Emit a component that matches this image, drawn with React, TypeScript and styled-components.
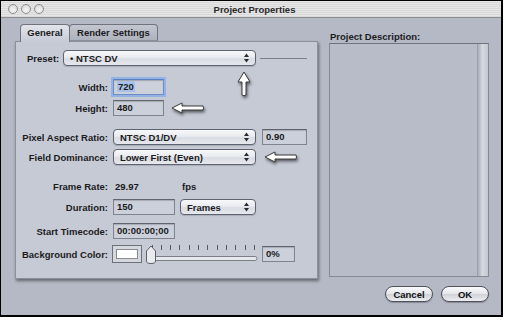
import React from 'react';
import styled, { createGlobalStyle } from 'styled-components';

const GlobalStyle = createGlobalStyle`
  * { box-sizing: border-box; }
  html, body { margin: 0; padding: 0; background: #ffffff; }
  body { font-family: "Liberation Sans", Arial, sans-serif; }
`;

const Window = styled.div`
  width: 503px;
  height: 317px;
  border: 1px solid #000;
  border-right-width: 2px;
  border-bottom-width: 2px;
  background: #b5b9c5;
  display: flex;
  flex-direction: column;
  font-size: 9.5px;
  font-weight: bold;
  color: #1b1b1d;
`;

const TitleBar = styled.div`
  height: 17px;
  flex: none;
  display: grid;
  grid-template-columns: 1fr auto 1fr;
  align-items: center;
  padding-left: 7px;
  background: repeating-linear-gradient(to bottom, #e6e6e6 0, #e6e6e6 1px, #d8d8d8 1px, #d8d8d8 2px);
  border-bottom: 1px solid #8d8d8f;
`;

const Lights = styled.div`
  display: flex;
  gap: 3px;
`;

const Light = styled.span`
  width: 10px;
  height: 10px;
  border-radius: 50%;
  border: 1px solid #8f8f92;
  background: radial-gradient(circle at 50% 65%, #f6f6f6, #d2d2d4);
`;

const Title = styled.div`
  color: #2a2a2c;
  font-size: 9.5px;
`;

const Main = styled.div`
  display: grid;
  grid-template-columns: 303px 160px;
  column-gap: 11px;
  padding: 6px 0 0 14px;
`;

const LeftColumn = styled.div`
  display: flex;
  flex-direction: column;
`;

const TabRow = styled.div`
  display: flex;
  height: 18px;
  padding-left: 5px;
  margin-bottom: -1px;
  position: relative;
  z-index: 1;
`;

const Tab = styled.div<{ $active?: boolean; $w: number }>`
  width: ${p => p.$w}px;
  height: ${p => (p.$active ? 18 : 17)}px;
  margin-left: -1px;
  border: 1px solid #6f737e;
  border-bottom: ${p => (p.$active ? 'none' : '1px solid #8c909a')};
  border-radius: 4px 4px 0 0;
  text-align: center;
  line-height: 16px;
  background: ${p =>
    p.$active
      ? 'linear-gradient(to bottom, #e3e5eb, #c6cad5)'
      : 'linear-gradient(to bottom, #c4c7d0, #adb1bc)'};
  &:first-child { margin-left: 0; }
`;

const Panel = styled.div`
  height: 238px;
  border: 1px solid #8c909a;
  background: #c6cad5;
  box-shadow: 1px 2px 3px rgba(0, 0, 0, 0.45);
  padding-top: 8px;
`;

const PresetRow = styled.div`
  position: relative;
  display: flex;
  align-items: center;
  height: 16px;
  padding-left: 11px;
`;

const PresetLabel = styled.span`
  width: 36px;
`;

const Rule = styled.div`
  width: 47px;
  height: 1px;
  margin-left: 4px;
  background: #7c808a;
`;

const FormRow = styled.div<{ $mt: number; $h?: number }>`
  display: grid;
  grid-template-columns: 92px auto;
  column-gap: 5px;
  align-items: center;
  height: ${p => p.$h ?? 16}px;
  margin-top: ${p => p.$mt}px;
`;

const Label = styled.span`
  text-align: right;
  white-space: nowrap;
`;

const Controls = styled.div<{ $gap?: number }>`
  display: flex;
  align-items: center;
  gap: ${p => p.$gap ?? 0}px;
`;

const PopUp = styled.div<{ $w: number }>`
  width: ${p => p.$w}px;
  height: 16px;
  border: 1px solid #5e6271;
  border-radius: 4px;
  background: linear-gradient(to bottom, #f7f8fa 0%, #e9ebef 45%, #d9dce3 55%, #e6e8ed 100%);
  box-shadow: 0 1px 1px rgba(0, 0, 0, 0.15);
  display: flex;
  align-items: center;
  justify-content: space-between;
  padding: 0 6px 0 6px;
  white-space: nowrap;
`;

const Field = styled.div<{ $w: number; $focused?: boolean }>`
  width: ${p => p.$w}px;
  height: 16px;
  border: 1px solid ${p => (p.$focused ? '#6d8dc6' : '#80848e')};
  border-top-color: ${p => (p.$focused ? '#5d7fbf' : '#60646d')};
  background: #ccd0da;
  box-shadow: ${p =>
    p.$focused
      ? '0 0 0 2px #93b3e6, inset 0 1px 1px rgba(0,0,0,0.2)'
      : 'inset 0 1px 1px rgba(0,0,0,0.18)'};
  padding-left: 3px;
  line-height: 14px;
  white-space: nowrap;
`;

const Selected = styled.span`
  background: #a8c1e8;
  padding: 0 1px;
`;

const Plain = styled.span<{ $w?: number }>`
  display: inline-block;
  width: ${p => (p.$w ? `${p.$w}px` : 'auto')};
  padding-left: 2px;
`;

const Swatch = styled.div`
  width: 30px;
  height: 18px;
  border: 1px solid #6d717a;
  background: #d4d7de;
  padding: 3px 3px;
  margin-left: -1px;
`;

const SwatchColor = styled.div`
  height: 100%;
  background: #ffffff;
  border: 1px solid #8a8c92;
`;

const SliderBox = styled.svg`
  margin-left: 4px;
  margin-right: 4px;
  flex: none;
`;

const Annotation = styled.svg`
  flex: none;
  overflow: visible;
  filter: drop-shadow(1px 2px 1.5px rgba(0, 0, 0, 0.55));
`;

const UpAnnotation = styled(Annotation)`
  position: absolute;
  left: 221px;
  top: 21px;
`;

const RightColumn = styled.div`
  display: flex;
  flex-direction: column;
`;

const DescLabel = styled.div`
  margin-top: 7px;
  height: 12px;
  line-height: 12px;
  padding-left: 1px;
`;

const DescBox = styled.div`
  height: 234px;
  border: 1px solid #858994;
  border-top-color: #6f737d;
  background: #b8bcc8;
  display: flex;
  justify-content: flex-end;
`;

const ScrollTrack = styled.div`
  width: 11px;
  border-left: 1px solid #9ca0aa;
  background: linear-gradient(to right, #a9adb8, #d6d9e0 45%, #c4c7d0);
`;

const Footer = styled.div`
  display: flex;
  justify-content: flex-end;
  gap: 8px;
  padding: 7px 12px 0 0;
`;

const PillButton = styled.div`
  width: 48px;
  height: 16px;
  border: 1px solid #4f525a;
  border-radius: 8px;
  background: linear-gradient(to bottom, #fbfbfc 0%, #e4e6ea 48%, #cfd2d8 52%, #eceef1 100%);
  box-shadow: 0 1px 1px rgba(0, 0, 0, 0.25);
  display: flex;
  align-items: center;
  justify-content: center;
  color: #111;
`;

const Steppers = () => (
  <svg width="5" height="10" viewBox="0 0 5 10">
    <polygon points="0,4 2.5,0.5 5,4" fill="#2a2a2e" />
    <polygon points="0,6 2.5,9.5 5,6" fill="#2a2a2e" />
  </svg>
);

const Select = ({ w, children }: { w: number; children: React.ReactNode }) => (
  <PopUp $w={w}>
    <span>{children}</span>
    <Steppers />
  </PopUp>
);

const LeftArrow = () => (
  <Annotation width="34" height="12" viewBox="0 0 34 12">
    <path
      d="M1 6 L11 1 L11 4 L32 4 Q33 6 32 8 L11 8 L11 11 Z"
      fill="#ffffff"
      stroke="#3a3a3a"
      strokeWidth="1"
      strokeLinejoin="round"
    />
  </Annotation>
);

const UpArrow = () => (
  <UpAnnotation width="14" height="26" viewBox="0 0 14 26">
    <path
      d="M7 1 L13 11 L9 11 L9 24 Q7 25.5 5 24 L5 11 L1 11 Z"
      fill="#ffffff"
      stroke="#3a3a3a"
      strokeWidth="1"
      strokeLinejoin="round"
    />
  </UpAnnotation>
);

const Slider = () => {
  const ticks = Array.from({ length: 12 }, (_, i) => 5.5 + i * 9.3);
  return (
    <SliderBox width="112" height="20" viewBox="0 0 112 20">
      {ticks.map(x => (
        <line key={x} x1={Math.round(x) + 0.5} y1="1" x2={Math.round(x) + 0.5} y2="6" stroke="#55585f" strokeWidth="1" />
      ))}
      <rect x="4" y="12.5" width="107" height="4" rx="2" fill="#e6e8ec" stroke="#7b7f88" />
      <path
        d="M5 2 L9.5 7 L9.5 17 Q9.5 19.5 5 19.5 Q0.5 19.5 0.5 17 L0.5 7 Z"
        fill="#e9ebef"
        stroke="#5c6068"
        strokeWidth="1"
      />
    </SliderBox>
  );
};

export default function App() {
  return (
    <>
      <GlobalStyle />
      <Window>
        <TitleBar>
          <Lights>
            <Light />
            <Light />
            <Light />
          </Lights>
          <Title>Project Properties</Title>
          <span />
        </TitleBar>

        <Main>
          <LeftColumn>
            <TabRow>
              <Tab $active $w={50}>General</Tab>
              <Tab $w={89}>Render Settings</Tab>
            </TabRow>
            <Panel>
              <PresetRow>
                <PresetLabel>Preset:</PresetLabel>
                <Select w={193}>• NTSC DV</Select>
                <Rule />
                <UpArrow />
              </PresetRow>

              <FormRow $mt={13}>
                <Label>Width:</Label>
                <Controls>
                  <Field $w={51} $focused>
                    <Selected>720</Selected>
                  </Field>
                </Controls>
              </FormRow>

              <FormRow $mt={5}>
                <Label>Height:</Label>
                <Controls $gap={7}>
                  <Field $w={51}>480</Field>
                  <LeftArrow />
                </Controls>
              </FormRow>

              <FormRow $mt={13}>
                <Label>Pixel Aspect Ratio:</Label>
                <Controls $gap={6}>
                  <Select w={143}>NTSC D1/DV</Select>
                  <Field $w={45}>0.90</Field>
                </Controls>
              </FormRow>

              <FormRow $mt={4}>
                <Label>Field Dominance:</Label>
                <Controls $gap={8}>
                  <Select w={143}>Lower First (Even)</Select>
                  <LeftArrow />
                </Controls>
              </FormRow>

              <FormRow $mt={13}>
                <Label>Frame Rate:</Label>
                <Controls>
                  <Plain $w={67}>29.97</Plain>
                  <Plain>fps</Plain>
                </Controls>
              </FormRow>

              <FormRow $mt={5}>
                <Label>Duration:</Label>
                <Controls $gap={5}>
                  <Field $w={62}>150</Field>
                  <Select w={76}>Frames</Select>
                </Controls>
              </FormRow>

              <FormRow $mt={8}>
                <Label>Start Timecode:</Label>
                <Controls>
                  <Field $w={62}>00:00:00;00</Field>
                </Controls>
              </FormRow>

              <FormRow $mt={5} $h={18}>
                <Label>Background Color:</Label>
                <Controls>
                  <Swatch>
                    <SwatchColor />
                  </Swatch>
                  <Slider />
                  <Field $w={33}>0%</Field>
                </Controls>
              </FormRow>
            </Panel>
          </LeftColumn>

          <RightColumn>
            <DescLabel>Project Description:</DescLabel>
            <DescBox>
              <ScrollTrack />
            </DescBox>
          </RightColumn>
        </Main>

        <Footer>
          <PillButton>Cancel</PillButton>
          <PillButton>OK</PillButton>
        </Footer>
      </Window>
    </>
  );
}
